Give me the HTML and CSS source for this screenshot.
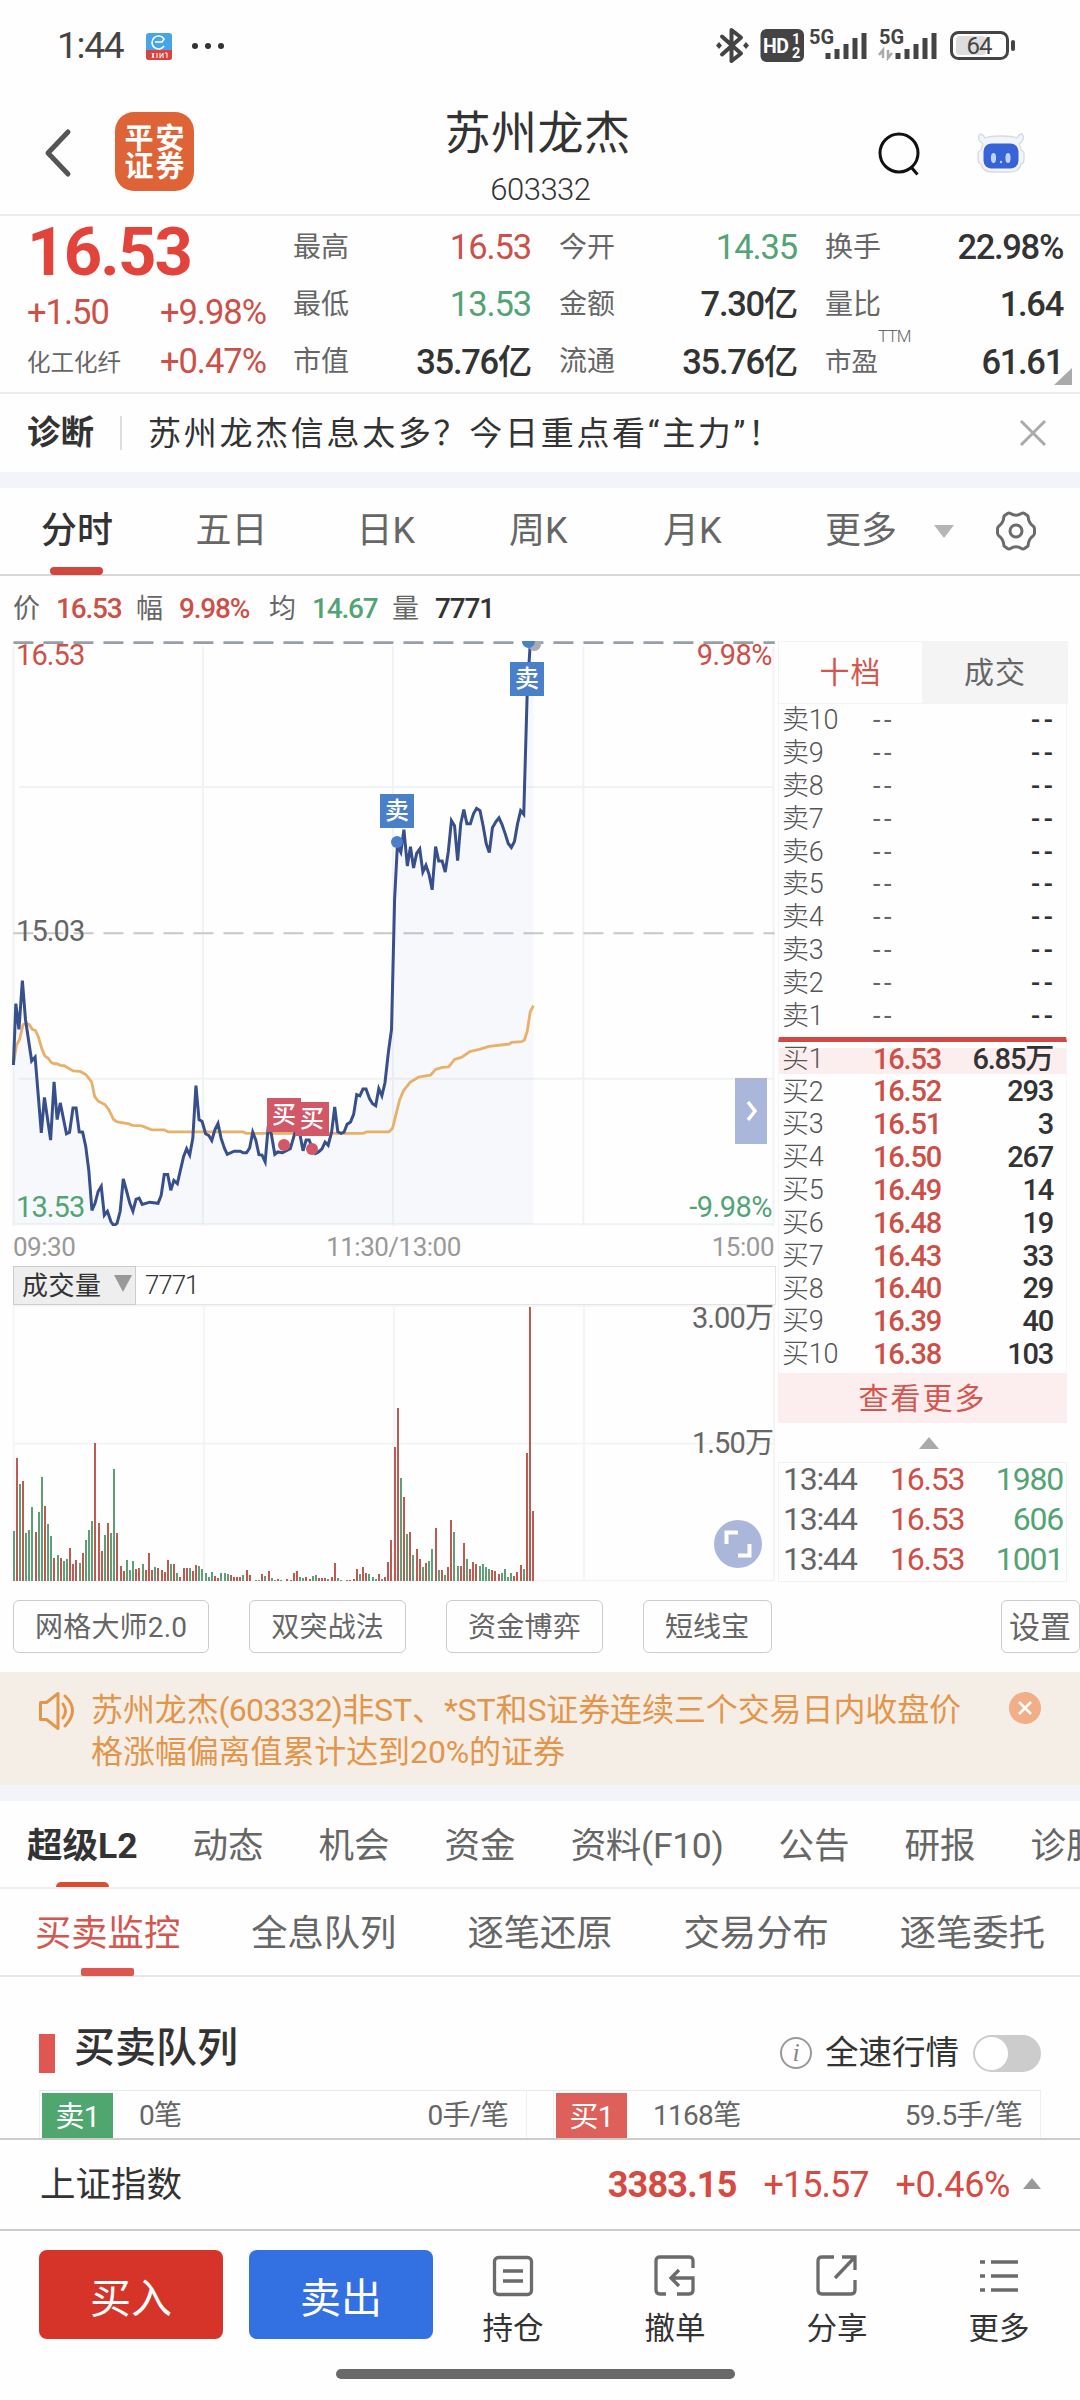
FILE: index.html
```html
<!DOCTYPE html>
<html lang="zh-CN">
<head>
<meta charset="utf-8">
<title>苏州龙杰 603332</title>
<link rel="stylesheet" href="styles.css">
</head>
<body>
<div class="screen">

  <div class="status">
    <span class="clock">1:44</span>
    <svg class="app-ico" width="26" height="27" viewBox="0 0 26 27"><rect width="26" height="27" rx="3" fill="#45a5e6"/><path d="M0 17h26v7a3 3 0 0 1-3 3H3a3 3 0 0 1-3-3z" fill="#d8433f"/><path d="M9 9h7l2-3a6.500 6.500 0 1 0 0 7" fill="none" stroke="#fff" stroke-width="1.600"/><path d="M6 20l2 5M8 20l-2 5M11 20v5M14 20v5l3-5v5M19 20h2v5" stroke="#fff" stroke-width="1" fill="none"/></svg>
    <svg class="dots" width="32" height="6" viewBox="0 0 32 6" fill="#333"><circle cx="3" cy="3" r="3"/><circle cx="16" cy="3" r="3"/><circle cx="29" cy="3" r="3"/></svg>
    <svg class="sys" width="304" height="40" viewBox="714 26 304 40">
      <path d="M722 36.500l19 17-9.500 7.500V30l9.500 7.500-19 17" fill="none" stroke="#444" stroke-width="4" stroke-linecap="round" stroke-linejoin="round"/><path d="M719 42l3 3.500-3 3.500-3-3.500zM746 42l3 3.500-3 3.500-3-3.500z" fill="#444"/>
      <rect x="760.500" y="29" width="43.500" height="33" rx="6" fill="#444"/>
      <text x="763" y="52.500" class="t-hd">HD</text><text x="792" y="44" class="t-sub">1</text><text x="792" y="58" class="t-sub">2</text>
      <text x="809" y="44" class="t-5g">5G</text><text x="879" y="44" class="t-5g">5G</text>
      <path d="M828 59v-6M837 59v-10M846 59v-15M855 59v-21M864 59v-26M898 59v-6M907 59v-10M916 59v-15M925 59v-21M934 59v-26" stroke="#444" stroke-width="5" fill="none"/>
      <path d="M883 58V50l-4 5M888 50v8l4-5" fill="none" stroke="#aaa" stroke-width="2.500"/>
      <rect x="951.500" y="32.500" width="56" height="26" rx="7" fill="#fff" stroke="#444" stroke-width="3"/><rect x="956" y="36" width="30" height="19" rx="4" fill="#ddd"/><path d="M1013 42v7" stroke="#444" stroke-width="4" stroke-linecap="round"/>
      <text x="966.500" y="54" class="t-bat">64</text>
    </svg>
  </div>

  <header class="head">
    <svg class="back" width="30" height="50" viewBox="0 0 30 50"><path d="M25 4L5 25l20 21" fill="none" stroke="#555" stroke-width="5" stroke-linecap="round" stroke-linejoin="round"/></svg>
    <div class="logo"><span>平安</span><span>证券</span></div>
    <div class="title"><h1>苏州龙杰</h1><p>603332</p></div>
    <svg class="search" width="46" height="48" viewBox="0 0 46 48" fill="none" stroke="#111" stroke-width="3"><circle cx="22" cy="22" r="19"/><path d="M34 36l6.500 7.500"/></svg>
    <svg class="robot" width="50" height="42" viewBox="0 0 50 42"><path d="M7 12Q0 7 4 2q3 0 5 4 4-2 16-2t16 2q2-4 5-4 4 5-3 10 2 4 2 6 3 1 3 4v6q0 3-3 4-2 8-11 8H16Q7 40 5 32q-3-1-3-4v-6q0-3 3-4 0-2 2-6z" fill="#f3f4f7" stroke="#d9dbe2" stroke-width="1.300"/><rect x="7.500" y="11.500" width="35" height="25" rx="8" fill="#3762d8"/><ellipse cx="17.500" cy="26" rx="2.600" ry="5" fill="#bcd6fb"/><ellipse cx="32" cy="26" rx="2.600" ry="5" fill="#bcd6fb"/><circle cx="25" cy="30" r="1.200" fill="#bcd6fb"/></svg>
  </header>

  <section class="quote">
    <div class="q-main">
      <div class="q-price">16.53</div>
      <div class="q-row"><b>+1.50</b><b>+9.98%</b></div>
      <div class="q-row"><span>化工化纤</span><b>+0.47%</b></div>
    </div>
    <dl class="q-grid">
      <div><dt>最高</dt><dd class="up">16.53</dd></div><div><dt>今开</dt><dd class="down">14.35</dd></div><div><dt>换手</dt><dd>22.98%</dd></div>
      <div><dt>最低</dt><dd class="down">13.53</dd></div><div><dt>金额</dt><dd>7.30亿</dd></div><div><dt>量比</dt><dd>1.64</dd></div>
      <div><dt>市值</dt><dd>35.76亿</dd></div><div><dt>流通</dt><dd>35.76亿</dd></div><div><dt class="narrow">市盈<sup>TTM</sup></dt><dd class="shift">61.61</dd></div>
    </dl>
    <i class="corner"></i>
  </section>

  <section class="diag">
    <b>诊断</b><i></i><p>苏州龙杰信息太多？今日重点看“主力”！</p>
    <svg width="28" height="28" viewBox="0 0 28 28"><path d="M2 2l24 24M26 2L2 26" stroke="#aaa" stroke-width="3"/></svg>
  </section>
  <div class="band"></div>

  <nav class="period">
    <a class="on">分时</a><a>五日</a><a>日K</a><a>周K</a><a>月K</a><a>更多</a><i class="tri-down"></i>
    <svg width="42" height="40" viewBox="0 0 42 40" fill="none" stroke="#6b6b6b" stroke-width="3" stroke-linejoin="round"><path d="M12.500 2.500Q14 1.500 15.500 2.500Q21 6 26.500 2.500Q28 1.500 29.500 2.500L33 5Q33.500 12 38 15Q39.500 16 39.500 18V22Q39.500 24 38 25Q33.500 28 33 35L29.500 37.500Q28 38.500 26.500 37.500Q21 34 15.500 37.500Q14 38.500 12.500 37.500L9 35Q8.500 28 4 25Q2.500 24 2.500 22V18Q2.500 16 4 15Q8.500 12 9 5Z"/><circle cx="21" cy="20" r="6"/></svg>
  </nav>

  <div class="info"><span>价</span><b class="up w1">16.53</b><span>幅</span><b class="up w2">9.98%</b><span>均</span><b class="down w3">14.67</b><span>量</span><b>7771</b></div>

  <main class="board">
    <div class="charts">
      <div class="price-chart">
        <svg viewBox="34.850 25.290 2218.700 1482" width="764" height="586" preserveAspectRatio="none">
          <g class="grid"><path d="M39 42V1507M589 42V1507M1141 42V1507M1694 42V1507M2246 42V1507M55 397H2249M55 1135H2249M39 1503H2249"/></g>
          <path class="dash top" d="M39 32H2250"/><path class="dash" d="M39 767H2250"/>
          <path id="area" class="area"/><path id="avg" class="avg"/><path id="line" class="line"/>
        </svg>
        <i class="dot gray"></i><i class="dot d1"></i><i class="dot d2"></i><i class="dot red d3"></i><i class="dot red d4"></i>
        <span class="mark m1">卖</span><span class="mark m2">卖</span><span class="mark red m3">买</span><span class="mark red m4">买</span>
        <span class="lab up tl">16.53</span><span class="lab up tr">9.98%</span><span class="lab ml">15.03</span><span class="lab down bl">13.53</span><span class="lab down br">-9.98%</span>
        <span class="expand"><svg width="14" height="22" viewBox="0 0 14 22"><path d="M3 2l7 9-7 9" fill="none" stroke="#fff" stroke-width="3.500"/></svg></span>
      </div>
      <div class="axis"><span>09:30</span><span>11:30/13:00</span><span>15:00</span></div>
      <div class="vol-head"><span>成交量<i></i></span><b>7771</b></div>
      <div class="vol-chart">
        <svg viewBox="36 165 2292 831" width="764" height="277">
          <path class="vgrid" d="M41 165V993M612 165V993M1182 165V993M1752 165V993M2322 165V993M41 581H2322M41 992H2322M41 168H2322"/>
          <path id="vr" class="vr"/><path id="vg" class="vg"/>
        </svg>
        <span class="vlab v1">3.00万</span><span class="vlab v2">1.50万</span>
        <span class="full"><svg width="28" height="28" viewBox="0 0 28 28"><path d="M2.500 14V2.500H14M25.500 14v11.500H14" fill="none" stroke="#fff" stroke-width="4"/></svg></span>
      </div>
    </div>

    <aside class="book">
      <div class="b-tabs"><span class="on">十档</span><span>成交</span></div>
      <div class="b-list sell">
        <div><span>卖10</span><i>--</i><b>--</b></div><div><span>卖9</span><i>--</i><b>--</b></div><div><span>卖8</span><i>--</i><b>--</b></div><div><span>卖7</span><i>--</i><b>--</b></div><div><span>卖6</span><i>--</i><b>--</b></div><div><span>卖5</span><i>--</i><b>--</b></div><div><span>卖4</span><i>--</i><b>--</b></div><div><span>卖3</span><i>--</i><b>--</b></div><div><span>卖2</span><i>--</i><b>--</b></div><div><span>卖1</span><i>--</i><b>--</b></div>
      </div>
      <div class="b-list buy">
        <div class="hot"><span>买1</span><i>16.53</i><b>6.85万</b></div><div><span>买2</span><i>16.52</i><b>293</b></div><div><span>买3</span><i>16.51</i><b>3</b></div><div><span>买4</span><i>16.50</i><b>267</b></div><div><span>买5</span><i>16.49</i><b>14</b></div><div><span>买6</span><i>16.48</i><b>19</b></div><div><span>买7</span><i>16.43</i><b>33</b></div><div><span>买8</span><i>16.40</i><b>29</b></div><div><span>买9</span><i>16.39</i><b>40</b></div><div><span>买10</span><i>16.38</i><b>103</b></div>
      </div>
      <div class="b-more">查看更多</div>
      <div class="b-fold"><i></i></div>
      <div class="ticks">
        <div><span>13:44</span><i>16.53</i><b>1980</b></div><div><span>13:44</span><i>16.53</i><b>606</b></div><div><span>13:44</span><i>16.53</i><b>1001</b></div>
      </div>
    </aside>
  </main>

  <div class="tools"><span>网格大师2.0</span><span>双突战法</span><span>资金博弈</span><span>短线宝</span><span class="set">设置</span></div>

  <section class="notice">
    <svg width="38" height="40" viewBox="0 0 38 40" fill="none" stroke="#e2964b" stroke-width="3" stroke-linejoin="round" stroke-linecap="round"><path d="M2.500 11.500h6L20 2.500v35L8.500 28.500h-6z"/><path d="M25 13q5 7 0 14M27 5q15 14 0 30"/></svg>
    <p>苏州龙杰<span>(603332)</span>非ST、*ST和S证券连续三个交易日内收盘价<br>格涨幅偏离值累计达到20%的证券</p>
    <svg class="x" width="32" height="32" viewBox="0 0 32 32"><circle cx="16" cy="16" r="16" fill="#f2ae86"/><path d="M10 10l12 12M22 10L10 22" stroke="#fff" stroke-width="2.500"/></svg>
  </section>
  <div class="band"></div>

  <nav class="tabs2"><a class="on">超级L2</a><a>动态</a><a>机会</a><a>资金</a><a class="f10">资料(F10)</a><a>公告</a><a>研报</a><a>诊股</a></nav>
  <nav class="tabs3"><a class="on">买卖监控</a><a>全息队列</a><a>逐笔还原</a><a>交易分布</a><a>逐笔委托</a></nav>

  <section class="queue">
    <div class="q-head"><i></i><h2>买卖队列</h2><em>i</em><span>全速行情</span><u></u></div>
    <div class="q-cols">
      <div><b>卖1</b><span>0笔</span><span>0手/笔</span></div>
      <div class="r"><b>买1</b><span>1168笔</span><span>59.5手/笔</span></div>
    </div>
  </section>

  <div class="index"><span>上证指数</span><b>3383.15</b><i class="a">+15.57</i><i class="p">+0.46%</i><u></u></div>

  <footer class="bar">
    <button class="buy-b">买入</button><button class="sell-b">卖出</button>
    <div class="acts">
      <div><svg viewBox="0 0 44 44"><rect x="3.500" y="3.500" width="37" height="37" rx="4"/><path d="M12 17h20M12 27h20"/></svg><span>持仓</span></div>
      <div><svg viewBox="0 0 44 44"><path d="M40 14V7q0-4-4-4H7Q3 3 3 7v29q0 4 4 4h6M24 40h12q4 0 4-4V24H19M26 16l-8 8 8 8"/></svg><span>撤单</span></div>
      <div><svg viewBox="0 0 44 44"><path d="M19 3H7Q3 3 3 7v29q0 4 4 4h29q4 0 4-4V26M27 3h13v13M39 4L20 24"/></svg><span>分享</span></div>
      <div><svg viewBox="0 0 44 44"><path d="M3 8h5M14 8h27M3 22h5M14 22h27M3 36h5M14 36h27"/></svg><span>更多</span></div>
    </div>
    <i class="home"></i>
  </footer>
</div>
<script src="chart.js"></script>
</body>
</html>
```
FILE: styles.css
```css
* { box-sizing: border-box; margin: 0; padding: 0; }
body { width: 1080px; background: #fefefe; font-family: Roboto, "Noto Sans CJK SC", sans-serif; line-height: 1.2; color: #333; }
.screen { width: 1080px; height: 2400px; overflow: hidden; display: flex; flex-direction: column; background: #fefefe; }
.screen > * { flex: none; }
b { font-weight: 500; }
i, em { font-style: normal; }
svg { display: block; flex: none; }
h1, h2 { font-weight: 500; }
.up { color: #cd5048; }
.down { color: #52a474; }

.status { height: 92px; display: flex; align-items: center; padding-left: 57px; }
.clock { font-size: 37px; letter-spacing: -1.300px; color: #444; width: 89px; }
.dots { margin-left: 20px; }
.sys { margin-left: 490px; }
.t-hd { font: 700 19.500px Roboto; fill: #fff; letter-spacing: -.5px; }
.t-sub { font: 700 14.500px Roboto; fill: #fff; }
.t-5g { font: 700 20px Roboto; fill: #444; letter-spacing: 0; }
.t-bat { font: 400 24px Roboto; fill: #444; letter-spacing: -1px; }

.head { height: 124px; border-bottom: 2px solid #ececec; display: flex; align-items: center; padding: 0 54px 2px 43px; }
.head .logo { position: relative; top: -1px; }
.head .back, .head .robot { position: relative; top: 1px; }
.head .search { position: relative; top: 3px; }
.logo { width: 79px; height: 79px; border-radius: 19px; background: #de6437; margin-left: 42px; color: #fff; font-size: 29px; letter-spacing: 2px; padding: 3px 0 0 2px; font-weight: 700; line-height: 28px; display: flex; flex-direction: column; align-items: center; justify-content: center; }
.title { width: 360px; margin-left: 165px; text-align: center; }
.title h1 { font-size: 46px; font-weight: 400; letter-spacing: .5px; line-height: 60px; color: #333; padding-top: 2px; margin-left: -2px; }
.title p { font-size: 31px; font-weight: 300; letter-spacing: -.5px; line-height: 40px; margin-top: 7px; margin-bottom: -6px; padding-left: 4px; }
.search { margin-left: 159px; }
.robot { margin-left: 53px; }

.quote { height: 178px; border-bottom: 2px solid #ececec; display: flex; position: relative; }
.q-main { width: 293px; padding: 0 27px 0 27px; color: #cd5048; }
.q-price { font-size: 67px; font-weight: 700; letter-spacing: -1.800px; color: #e2443c; line-height: 72px; height: 70px; }
.q-row { display: flex; justify-content: space-between; align-items: center; font-size: 34.500px; letter-spacing: -1px; }
.q-row:nth-child(2) { height: 54px; }
.q-row:nth-child(3) { height: 44px; }
.q-row b { font-weight: 400; }
.q-row span { font-size: 23.500px; letter-spacing: 0; color: #666; padding-top: 2px; }
.q-grid { flex: 1; display: grid; grid-template-columns: 266px 266px 238px; grid-template-rows: repeat(3, 57.300px); padding-top: 3px; }
.q-grid > div { display: flex; justify-content: space-between; align-items: center; padding-right: 28px; }
.q-grid > div:nth-child(3n) { padding-right: 0; }
.q-grid dt { position: relative; font-size: 28px; color: #666; }
.q-grid dd { font-size: 34.500px; letter-spacing: -1.300px; font-weight: 500; }
.q-grid .narrow { font-size: 26.500px; }
.q-grid sup { position: absolute; left: 53px; top: -20px; font-size: 17px; font-weight: 300; line-height: 20px; letter-spacing: -.8px; }
.q-grid dd.up, .q-grid dd.down { font-weight: 400; letter-spacing: -1.100px; }
.corner { position: absolute; right: 8px; bottom: 7px; border: solid transparent; border-width: 0 0 17px 18px; border-bottom-color: #aaa; }

.diag { height: 78px; display: flex; align-items: center; padding: 0 33px 0 27px; }
.diag b { font-weight: 700; font-size: 33.500px; }
.diag i { width: 2px; height: 34px; background: #ddd; margin-left: 26px; }
.diag p { margin-left: 26px; font-size: 33px; letter-spacing: 2.700px; flex: 1; padding-top: 1px; }
.band { height: 16px; background: #f3f4f9; }

.period { height: 88px; border-bottom: 2px solid #d8d8d8; display: flex; align-items: stretch; padding-left: 41px; font-size: 36px; line-height: 87px; color: #666; }
.period a { position: relative; width: 72px; margin-right: 82.500px; white-space: nowrap; }
.period a:nth-child(2) { margin-right: 89px; }
.period a:nth-child(3) { margin-right: 80.500px; }
.period a:nth-child(4) { margin-right: 82px; }
.period a:nth-child(5) { margin-right: 90px; }
.period a:nth-child(6) { margin-right: 37px; }
.period .on { color: #333; font-weight: 500; }
.period .on::after { content: ""; position: absolute; left: 9px; width: 53px; height: 8px; border-radius: 4px; background: #d1463d; bottom: -1px; }
.period svg { align-self: center; }
.tri-down { align-self: center; border: solid transparent; border-width: 13px 10px 0; border-top-color: #b5b5b5; margin-right: 41px; }

.info { height: 64px; display: flex; align-items: center; padding: 2px 0 0 13px; font-size: 28px; letter-spacing: -1.200px; }
.info span { font-size: 27px; color: #666; letter-spacing: 0; width: 43px; }
.info .w1 { width: 80px; } .info .w2 { width: 90px; } .info .w3 { width: 80px; }
.info b { white-space: nowrap; }

.board { display: flex; height: 942px; padding-left: 12px; }
.charts { width: 766px; }
.price-chart { position: relative; height: 586px; width: 764px; }
.price-chart path { vector-effect: non-scaling-stroke; fill: none; }
.grid path { stroke: #f1f2f3; stroke-width: 2; }
.price-chart .area { fill: #3a6bc0; fill-opacity: .045; }
.avg { stroke: #e8b068; stroke-width: 2.800; stroke-linejoin: round; }
.line { stroke: #374f8a; stroke-width: 3; stroke-linejoin: miter; }
.dash { stroke: #c6c8cb; stroke-width: 2; stroke-dasharray: 20 10; }
.dash.top { stroke: #969ea8; stroke-width: 2.600; }
.mark { position: absolute; width: 34px; height: 34px; background: #4a80ca; color: #fff; font-size: 24px; font-weight: 500; line-height: 34px; text-align: center; }
.mark.red, .dot.red { background: #d25767; }
.m1 { left: 368px; top: 154px; } .m2 { left: 498px; top: 22px; }
.m3 { left: 255px; top: 458px; } .m4 { left: 283px; top: 462px; }
.dot { position: absolute; width: 12px; height: 12px; border-radius: 50%; background: #4a80ca; }
.d1 { left: 379px; top: 196px; } .d3 { left: 266px; top: 499px; } .d4 { left: 294px; top: 503px; }
.d2 { left: 510px; top: 1px; height: 7px; border-radius: 0 0 7px 7px; width: 13px; }
.dot.gray { left: 516px; top: 1px; height: 10px; width: 13px; border-radius: 0 0 7px 7px; background: #a9adb3; }
.lab { position: absolute; font-size: 29px; line-height: 30px; letter-spacing: -.900px; }
.tl { left: 4px; top: 0; } .tr { right: 4px; top: 0; letter-spacing: -.5px; } .ml { left: 4px; top: 276px; color: #666; } .bl { left: 4px; top: 552px; } .br { right: 4px; top: 552px; letter-spacing: -.5px; }
.expand { position: absolute; left: 723px; top: 438px; width: 32px; height: 66px; background: #abb7da; display: flex; align-items: center; justify-content: center; padding-left: 2px; }
.axis { height: 40px; width: 762px; display: grid; grid-template-columns: 1fr auto 1fr; align-items: center; font-size: 26px; letter-spacing: -.500px; color: #999; padding: 4px 0 0 1px; }
.axis span:last-child { text-align: right; }
.vol-head { height: 39px; width: 763px; margin-left: 1px; border: 1px solid #e4e4e4; border-left: 0; display: flex; align-items: center; font-size: 26px; }
.vol-head span { width: 123px; height: 39px; background: #eee; border: 1px solid #ccc; display: flex; align-items: center; padding-left: 8px; letter-spacing: .500px; padding-top: 2px; }
.vol-head span i { border: solid transparent; border-width: 17px 9.500px 0; border-top-color: #999; margin-left: 12px; margin-bottom: 6px; }
.vol-head b { font-weight: 300; margin-left: 9px; letter-spacing: -1.100px; }
.vol-chart { position: relative; width: 764px; height: 277px; }
.vgrid { stroke: #f4f4f6; stroke-width: 5; fill: none; }
.vr { stroke: #bd5a52; stroke-width: 6; } .vg { stroke: #5f9f77; stroke-width: 6; }
.vlab { position: absolute; right: 3px; font-size: 29px; line-height: 30px; color: #666; letter-spacing: -.900px; }
.v1 { top: -2px; } .v2 { top: 123px; }
.full { position: absolute; left: 702px; top: 215px; width: 48px; height: 48px; border-radius: 50%; background: #abb7da; display: flex; align-items: center; justify-content: center; }

.book { width: 289px; }
.b-tabs { height: 63px; margin-top: 1px; display: grid; grid-template-columns: 143px 146px; font-size: 30px; letter-spacing: 1px; border: 1px solid #f3f3f3; }
.b-tabs span { display: flex; align-items: center; justify-content: center; background: #f4f4f4; color: #666; }
.b-tabs .on { background: transparent; color: #d4564e; }
.b-list { border: 1px solid #f5f5f6; border-width: 0 1px; }
.b-list > div { display: grid; grid-template-columns: 91px 90px 1fr; align-items: center; height: 32.850px; font-size: 29px; letter-spacing: -1.200px; padding: 0 13px 0 3px; }
.b-list span { font-size: 27px; font-weight: 300; color: #555; letter-spacing: -.3px; white-space: nowrap; }
.b-list i { color: #cd5048; font-weight: 500; }
.b-list b { text-align: right; white-space: nowrap; }
.sell { height: 337.500px; border-bottom: 5px solid #d04a43; }
.sell i { color: #666; font-weight: 400; }
.sell i, .sell b { letter-spacing: 3.600px; font-size: 27px; margin-right: -3.600px; }
.buy { height: 331px; }
.b-list .hot { background: linear-gradient(#fceeee, #fceeee) 0 6px / 100% 27px no-repeat; }
.b-more { height: 50px; background: #fceeee; color: #d4564e; font-size: 30px; letter-spacing: 2px; padding-top: 3px; display: flex; align-items: center; justify-content: center; }
.b-fold { height: 39px; display: flex; justify-content: center; align-items: center; padding: 2px 0 0 12px; }
.b-fold i { border: solid transparent; border-width: 0 10px 12px; border-bottom-color: #aaa; }
.ticks { height: 120px; border: 1px solid #f2f2f2; padding: 0 3px 0 4px; }
.ticks div { height: 40px; display: grid; grid-template-columns: 107px 87px 1fr; align-items: center; font-size: 32px; letter-spacing: -1.200px; position: relative; top: -3px; }
.ticks span { color: #666; } .ticks i { color: #cd5048; } .ticks b { color: #52a474; text-align: right; font-weight: 400; }

.tools { height: 90px; display: flex; gap: 40px; padding: 18px 0 19px 13px; font-size: 28px; color: #666; }
.tools span { height: 53px; border: 1.500px solid #ccc; border-radius: 6px; padding: 0 21px; line-height: 53px; white-space: nowrap; flex: none; letter-spacing: .2px; }
.tools .set { margin-left: auto; width: 79px; padding: 0 7px; font-size: 31px; letter-spacing: 0; }

.notice { height: 113px; background: #f5eee7; display: flex; padding: 19px 39px 0 38px; color: #e2964b; }
.notice p { margin: -2px 0 0 15px; font-size: 32px; line-height: 42px; letter-spacing: -.1px; flex: 1; white-space: nowrap; }
.notice span { letter-spacing: -.8px; }
.notice .x { margin-top: 1px; }

.tabs2 { height: 88px; border-bottom: 2px solid #efefef; display: flex; gap: 55px; padding-left: 27px; font-size: 35.500px; line-height: 90px; color: #666; white-space: nowrap; }
.tabs2 a, .tabs3 a { position: relative; flex: none; }
.tabs2 .on { color: #333; font-weight: 700; }
.tabs2 .f10 { letter-spacing: -.3px; }
.tabs2 .on::after { content: ""; position: absolute; left: 29px; bottom: 0; width: 53px; height: 5px; border-radius: 5px 5px 0 0; background: #d94d30; }
.tabs3 { height: 88px; border-bottom: 2px solid #e8e8e8; display: flex; gap: 71px; padding-left: 35px; font-size: 36.300px; line-height: 89px; color: #666; }
.tabs3 .on { color: #d4564e; }
.tabs3 .on::after { content: ""; position: absolute; left: 46px; bottom: -1px; width: 53px; height: 8px; background: #df564f; border-radius: 2px; }

.queue { height: 161px; padding: 56px 39px 0; }
.q-head { display: flex; height: 41px; align-items: center; }
.q-head i { width: 16px; height: 39px; background: #e05650; }
.q-head h2 { font-size: 41px; font-weight: 500; margin-left: 19px; margin-top: -9px; flex: 1; }
.q-head em { width: 32px; height: 32px; border: 2px solid #999; border-radius: 50%; font: italic 26px/27px "Liberation Serif", serif; color: #888; text-align: center; margin-top: -1px; }
.q-head span { font-size: 33.500px; margin-left: 13px; }
.q-head u { width: 68px; height: 37px; border-radius: 19px; background: radial-gradient(circle at 18.500px 50%, #fff 16px, #ccc 17px); margin-left: 14px; margin-top: -1px; }
.q-cols { display: flex; gap: 26px; margin-top: 16px; border-top: 1px solid #eaeaea; height: 48px; }
.q-cols > div { flex: 1; border: 1px solid #eee; border-width: 0 1px; display: flex; align-items: center; justify-content: space-between; padding: 2px 18px 0 2px; font-size: 28px; letter-spacing: -.700px; color: #666; }
.q-cols b { width: 71px; height: 46px; line-height: 48px; background: #4fa76f; color: #fff; text-align: center; font-weight: 400; font-size: 29px; }
.q-cols .r b { background: #de605b; }
.q-cols span:nth-child(2) { flex: 1; margin-left: 26px; }

.index { height: 93px; border-top: 2px solid #ccc; border-bottom: 2px solid #ccc; display: flex; align-items: center; padding: 2px 39px 0 40px; font-size: 36px; color: #d64a42; }
.index span { color: #333; flex: 1; font-size: 35.500px; }
.index b { font-weight: 700; letter-spacing: -.8px; }
.index .a { margin-left: 27px; letter-spacing: -1px; } .index .p { margin-left: 27px; letter-spacing: -.4px; }
.index u { border: solid transparent; border-width: 0 9.500px 11px; border-bottom-color: #999; margin-left: 13px; margin-top: -4px; }

.bar { height: 169px; display: flex; position: relative; padding: 19px 0 0 39px; gap: 26px; }
.bar button { width: 184px; height: 89px; border: 0; border-radius: 8px; color: #fff; font: 400 41px/88px "Noto Sans CJK SC", sans-serif; }
.buy-b { background: #d63329; } .sell-b { background: #3370e2; }
.acts { flex: 1; display: grid; grid-template-columns: repeat(4, 162px); margin-left: -27px; }
.acts div { display: flex; flex-direction: column; align-items: center; font-size: 30.500px; line-height: 40px; }
.acts svg { width: 44px; height: 44px; margin: 4px 0 11px; fill: none; stroke: #6b6b6b; stroke-width: 3.300; }
.home { position: absolute; left: 336px; top: 138px; width: 399px; height: 10px; border-radius: 5px; background: #696969; }
```
FILE: chart.js
```js
const line = "39,1100 46,945 55,1010 65,887 74,985 92,1090 102,1080 120,1272 129,1182 147,1290 157,1143 166,1238 175,1196 193,1274 202,1270 212,1209 221,1209 230,1269 240,1270 249,1306 258,1368 267,1468 276,1450 285,1420 294,1407 303,1480 312,1470 322,1496 331,1507 340,1500 349,1470 358,1388 368,1420 377,1450 386,1470 395,1440 404,1437 413,1453 435,1447 459,1450 468,1430 477,1377 487,1377 496,1417 505,1392 515,1400 533,1332 542,1312 551,1328 560,1285 569,1152 578,1238 587,1243 597,1274 606,1278 615,1291 624,1264 633,1248 642,1285 652,1311 660,1326 680,1318 698,1318 706,1322 716,1322 725,1310 734,1270 743,1290 752,1327 761,1328 770,1345 779,1255 788,1275 798,1326 807,1320 820,1322 843,1312 852,1285 862,1255 871,1275 880,1317 889,1290 898,1290 907,1312 916,1324 925,1320 935,1312 944,1295 953,1303 963,1270 972,1206 981,1269 990,1273 999,1270 1008,1250 1018,1244 1027,1225 1036,1175 1045,1178 1054,1161 1063,1161 1073,1185 1082,1198 1091,1203 1100,1160 1109,1178 1118,1145 1128,1067 1137,1010 1146,680 1154,545 1164,562 1173,505 1183,597 1192,548 1201,602 1210,565 1219,554 1228,612 1237,595 1246,618 1255,657 1265,548 1274,584 1284,584 1293,612 1302,560 1311,482 1320,495 1329,583 1338,490 1347,454 1356,490 1366,490 1375,465 1384,451 1394,457 1403,495 1412,540 1421,563 1430,500 1440,485 1449,475 1458,492 1467,515 1476,540 1485,550 1494,535 1503,490 1512,457 1521,466 1531,160 1540,32";
const avg = "39,1098 48,1050 57,1035 67,998 76,995 85,998 94,1010 103,1013 112,1030 121,1058 130,1077 140,1083 148,1093 157,1097 166,1097 175,1101 187,1102 212,1115 232,1116 250,1125 266,1143 275,1180 286,1192 304,1200 316,1213 330,1238 340,1244 375,1249 385,1253 412,1254 440,1264 476,1264 488,1269 705,1269 715,1273 1055,1273 1065,1269 1130,1269 1140,1260 1150,1225 1160,1190 1172,1165 1192,1143 1215,1131 1250,1126 1265,1111 1285,1106 1303,1105 1320,1086 1340,1081 1365,1066 1395,1060 1420,1053 1480,1047 1485,1043 1515,1041 1523,1037 1531,1015 1540,965 1549,950";
const down = "42,843 60,702 78,849 87,840 96,771 117,786 126,681 144,822 153,858 174,915 192,933 201,927 240,939 258,870 267,840 276,813 315,855 333,849 342,657 381,930 390,960 399,933 429,942 465,951 513,942 531,969 570,954 597,948 606,957 618,969 627,981 636,966 663,969 675,969 684,972 729,975 768,990 777,990 795,978 816,984 825,990 843,990 900,981 909,984 939,978 948,975 984,987 1014,984 1023,990 1080,972 1107,972 1119,981 1128,987 1146,987 1203,684 1221,852 1239,915 1269,951 1287,933 1296,897 1317,960 1335,975 1362,846 1374,948 1401,927 1440,948 1449,942 1458,951 1467,957 1506,969 1515,957 1524,981 1533,969 1572,957";
const up = "51,624 69,693 108,846 135,768 162,924 183,924 210,894 219,942 228,930 249,909 285,579 297,819 306,903 324,819 351,849 363,948 372,963 408,957 417,954 438,960 447,909 456,960 474,954 486,960 495,966 504,930 522,942 540,981 552,954 561,954 579,963 588,945 645,978 654,984 693,975 702,981 711,981 720,981 741,960 750,975 786,972 807,963 834,987 861,987 873,990 882,969 891,963 918,981 930,987 957,984 966,984 975,984 996,981 1005,939 1041,990 1050,990 1062,987 1071,957 1089,951 1098,969 1137,972 1155,981 1164,936 1173,870 1185,591 1194,474 1212,741 1230,846 1251,897 1260,927 1278,939 1308,834 1326,960 1344,951 1353,810 1383,948 1392,879 1410,957 1419,936 1428,942 1476,960 1485,963 1497,972 1542,978 1551,966 1563,945 1581,609 1590,171 1599,783";

const set = (id, d) => document.getElementById(id).setAttribute("d", d);
const bars = s => s.split(" ").map(p => "M" + p.replace(",", " ") + "V993").join("");
set("line", "M" + line);
set("avg", "M" + avg);
set("area", "M" + line + " 1549,32 1549,1503 39,1503Z");
set("vg", bars(down));
set("vr", bars(up));
```
